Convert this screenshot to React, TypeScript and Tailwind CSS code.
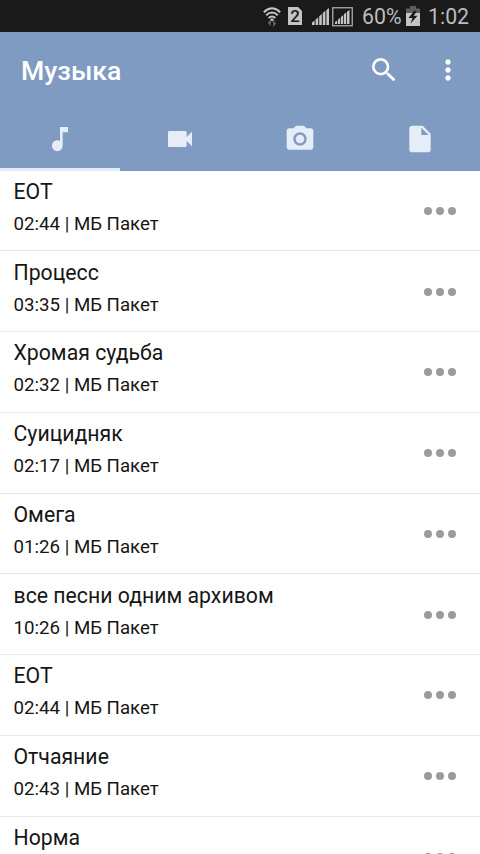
import React from "react";

const tracks = [
  { title: "ЕОТ", time: "02:44" },
  { title: "Процесс", time: "03:35" },
  { title: "Хромая судьба", time: "02:32" },
  { title: "Суицидняк", time: "02:17" },
  { title: "Омега", time: "01:26" },
  { title: "все песни одним архивом", time: "10:26" },
  { title: "ЕОТ", time: "02:44" },
  { title: "Отчаяние", time: "02:43" },
  { title: "Норма" },
];

const tabs = [
  "M12 3v10.55c-.59-.34-1.27-.55-2-.55-2.21 0-4 1.79-4 4s1.79 4 4 4 4-1.79 4-4V7h4V3h-6z",
  "M17 10.5V7c0-.55-.45-1-1-1H4c-.55 0-1 .45-1 1v10c0 .55.45 1 1 1h12c.55 0 1-.45 1-1v-3.5l4 4v-11l-4 4z",
  "M9 2 7.17 4H4c-1.1 0-2 .9-2 2v12c0 1.1.9 2 2 2h16c1.1 0 2-.9 2-2V6c0-1.1-.9-2-2-2h-3.17L15 2H9zm3 15c-2.76 0-5-2.24-5-5s2.24-5 5-5 5 2.24 5 5-2.24 5-5 5zm0-1.8a3.2 3.2 0 1 0 0-6.4 3.2 3.2 0 0 0 0 6.4z",
  "M6 2c-1.1 0-1.99.9-1.99 2L4 20c0 1.1.89 2 1.99 2H18c1.1 0 2-.9 2-2V8l-6-6H6zm7 7V3.5L18.5 9H13z",
];

function Icon({ d, className }: { d: string; className?: string }) {
  return (
    <svg viewBox="0 0 24 24" className={"size-8 " + (className ?? "")} fill="currentColor">
      <path d={d} />
    </svg>
  );
}

function WifiIcon() {
  return (
    <svg width="18" height="20" viewBox="0 0 18 20" fill="none" stroke="#c4c4c4" strokeWidth="1.9">
      <path d="M0.8 5.2Q9-2.6 17.2 5.2" />
      <path d="M3.2 8.2Q9 2.6 14.8 8.2" />
      <path d="M5.6 11Q9 7.8 12.4 11" />
      <path d="M9 11l2 1.8-2 1.8-2-1.8z" fill="#c4c4c4" stroke="none" />
      <path d="M7.2 18.5v-4.3l-2 2.2M10.8 13.5v4.600l2-2.200" stroke="#66625f" strokeWidth="1.5" />
    </svg>
  );
}

function SimIcon() {
  return (
    <div className="flex h-[18px] w-[14px] items-center justify-center bg-[#c4c4c4] [clip-path:polygon(0_0,72%_0,100%_22%,100%_100%,0_100%)]">
      <span className="pt-px text-[17px] leading-none font-medium text-[#1a1a1a]">2</span>
    </div>
  );
}

function SignalBars() {
  return (
    <svg width="17" height="17" viewBox="0 0 17 17" fill="#c4c4c4">
      <path d="M0 17v-2.5l2.6-2V17zM3.6 17v-5.5l2.6-2.3V17zM7.2 17V8.3L9.8 6V17zM10.8 17V5l2.6-2.3V17zM14.4 17V1.9L17 0v17z" />
    </svg>
  );
}

function BoxedSignal() {
  return (
    <svg width="21" height="20" viewBox="0 0 21 20">
      <rect x=".75" y=".75" width="19.5" height="18" fill="none" stroke="#aaa" strokeWidth="1.3" />
      <path d="M3 17v-2l2.2-1.5V17zM6 17v-4.5l2.2-1.7V17zM9 17V10l2.2-2V17zM12 17V7.3l2.2-2V17zM15 17V4.7L17.5 3v14z" fill="#c4c4c4" />
    </svg>
  );
}

function BatteryIcon() {
  return (
    <svg width="14" height="20" viewBox="0 0 14 20">
      <path d="M4 0h6v2.5h4v5H0v-5h4z" fill="#5c5c5c" />
      <path d="M0 7h14v13H0z" fill="#c4c4c4" />
      <path d="M8.5 4.5 2.5 12H6.5L4.5 17.5 11.5 9.7H7.5L10.5 6z" fill="#161616" />
    </svg>
  );
}

function StatusBar() {
  return (
    <div className="flex h-8 shrink-0 items-start bg-[#1a1a1a] pl-[263px] text-[#bcbcbc]">
      <div className="mt-[7px] w-6"><WifiIcon /></div>
      <div className="mt-[7px] ml-px w-6"><SimIcon /></div>
      <div className="mt-2 w-[20px]"><SignalBars /></div>
      <div className="mt-[6.5px] w-[30px]"><BoxedSignal /></div>
      <span className="mt-[4px] w-[44px] text-[21.3px] leading-[25px] whitespace-nowrap">60%</span>
      <div className="mt-[6px] w-[22px]"><BatteryIcon /></div>
      <span className="mt-[4px] text-[21.3px] leading-[25px]">1:02</span>
    </div>
  );
}

function Header() {
  return (
    <header className="h-[138.5px] shrink-0 bg-[#809bc2]">
      <div className="flex h-[75px] items-center pr-4 pl-[21px] text-white">
        <h1 className="flex-1 pt-[2px] text-[26.6px] font-medium">Музыка</h1>
        <Icon
          className="mr-8"
          d="M15.5 14h-.79l-.28-.27A6.471 6.471 0 0 0 16 9.5 6.5 6.5 0 1 0 9.5 16c1.61 0 3.09-.59 4.23-1.57l.27.28v.79l5 4.99L20.49 19l-4.99-5zm-6 0C7.01 14 5 11.99 5 9.5S7.01 5 9.5 5 14 7.01 14 9.5 11.99 14 9.5 14z"
        />
        <Icon d="M12 8c1.1 0 2-.9 2-2s-.9-2-2-2-2 .9-2 2 .9 2 2 2zm0 2c-1.1 0-2 .9-2 2s.9 2 2 2 2-.9 2-2-.9-2-2-2zm0 6c-1.1 0-2 .9-2 2s.9 2 2 2 2-.9 2-2-.9-2-2-2z" />
      </div>
      <nav className="grid h-[63.5px] grid-cols-4 text-[#e5edf9]">
        {tabs.map((d, i) => (
          <div
            key={i}
            className={
              "flex justify-center border-b-[3px] pt-[15.5px] " +
              (i === 0 ? "border-[#e1ecfc]" : "border-transparent")
            }
          >
            <Icon d={d} />
          </div>
        ))}
      </nav>
    </header>
  );
}

export default function App() {
  return (
    <div className="flex h-[854px] w-[480px] flex-col overflow-hidden bg-white font-['Roboto',sans-serif] text-[#161616]">
      <StatusBar />
      <Header />
      <main className="min-h-0 flex-1 overflow-hidden">
        {tracks.map((track, i) => (
          <div key={i} className="flex h-[80.75px] items-center border-b border-[#e8e8e8] pr-6 pl-[13.5px]">
            <div className="h-full flex-1 pt-[8.25px]">
              <div className="text-[21.25px] leading-[26px]">{track.title}</div>
              {track.time && (
                <div className="mt-[7px] text-[18.7px] leading-6">{track.time} | МБ Пакет</div>
              )}
            </div>
            <div className="flex gap-1 pt-px">
              <span className="size-2 rounded-full bg-[#9b9b9b]" />
              <span className="size-2 rounded-full bg-[#9b9b9b]" />
              <span className="size-2 rounded-full bg-[#9b9b9b]" />
            </div>
          </div>
        ))}
      </main>
    </div>
  );
}
